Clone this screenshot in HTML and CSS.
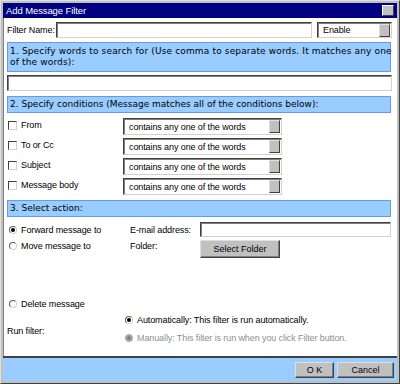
FILE: index.html
```html
<!DOCTYPE html>
<html lang="en">
<head>
    <meta charset="UTF-8">
    <title>Add Message Filter</title>
    <link rel="stylesheet" href="styles.css">
</head>
<body>
    <div class="window">
        <div class="titlebar">
            <span class="title">Add Message Filter</span>
            <span class="close-btn"></span>
        </div>
        <div class="content">
            <div class="name-row">
                <label class="lbl">Filter Name:</label>
                <div class="field name-field"></div>
                <div class="select enable-select"><span>Enable</span><i class="arrow"></i></div>
            </div>

            <div class="section tall">1. Specify words to search for (Use comma to separate words. It matches any one<br>of the words):</div>
            <div class="field words-field"></div>

            <div class="section">2. Specify conditions (Message matches all of the conditions below):</div>
            <div class="cond-list">
                <div class="cond-row">
                    <span class="check"></span><span class="lbl cond-lbl">From</span>
                    <div class="select cond-select"><span>contains any one of the words</span><i class="arrow"></i></div>
                </div>
                <div class="cond-row">
                    <span class="check"></span><span class="lbl cond-lbl">To or Cc</span>
                    <div class="select cond-select"><span>contains any one of the words</span><i class="arrow"></i></div>
                </div>
                <div class="cond-row">
                    <span class="check"></span><span class="lbl cond-lbl">Subject</span>
                    <div class="select cond-select"><span>contains any one of the words</span><i class="arrow"></i></div>
                </div>
                <div class="cond-row">
                    <span class="check"></span><span class="lbl cond-lbl">Message body</span>
                    <div class="select cond-select"><span>contains any one of the words</span><i class="arrow"></i></div>
                </div>
            </div>

            <div class="section">3. Select action:</div>
            <div class="action-row forward">
                <span class="radio on"></span><span class="lbl act-lbl">Forward message to</span>
                <span class="lbl sub-lbl">E-mail address:</span>
                <div class="field mail-field"></div>
            </div>
            <div class="action-row move">
                <span class="radio"></span><span class="lbl act-lbl">Move message to</span>
                <span class="lbl sub-lbl">Folder:</span>
                <button class="btn folder-btn">Select Folder</button>
            </div>
            <div class="action-row delete">
                <span class="radio"></span><span class="lbl act-lbl">Delete message</span>
            </div>

            <div class="run-row">
                <span class="lbl run-lbl">Run filter:</span>
                <div class="run-opts">
                    <div class="run-opt"><span class="radio on"></span><span class="lbl">Automatically: This filter is run automatically.</span></div>
                    <div class="run-opt disabled"><span class="radio on off"></span><span class="lbl">Manually: This filter is run when you click Filter button.</span></div>
                </div>
            </div>
        </div>
        <div class="bottombar">
            <button class="btn ok-btn">O K</button>
            <button class="btn cancel-btn">Cancel</button>
        </div>
    </div>
</body>
</html>
```

FILE: styles.css
```css
body {
    margin: 0;
    padding: 0;
    background-color: #ffffff;
    font-family: "Liberation Sans", Arial, sans-serif;
}

.window {
    width: 400px;
    height: 384px;
    box-sizing: border-box;
    background-color: #c0c0c0;
    border-top: 1px solid #dfdfdf;
    border-left: 1px solid #dfdfdf;
    border-right: 1px solid #404040;
    border-bottom: 1px solid #404040;
    padding: 2px;
    display: flex;
    flex-direction: column;
}

.titlebar {
    height: 15px;
    background-color: #000080;
    display: flex;
    align-items: center;
    justify-content: space-between;
    padding: 0 3px 0 3px;
}

.title {
    color: white;
    font-size: 9.5px;
    letter-spacing: -0.1px;
}

.close-btn {
    width: 10px;
    height: 9px;
    background-color: #c0c0c0;
    border-top: 1px solid #fff;
    border-left: 1px solid #fff;
    border-right: 1px solid #404040;
    border-bottom: 1px solid #404040;
}

.content {
    flex: 1;
    background-color: #fff;
    border-left: 1px solid #808080;
    padding: 4px 5px 0 3px;
    display: flex;
    flex-direction: column;
}

.lbl {
    font-size: 9px;
    letter-spacing: -0.1px;
    color: #000;
    white-space: nowrap;
}

.field {
    height: 16px;
    box-sizing: border-box;
    background: #fff;
    border-top: 1px solid #404040;
    border-left: 1px solid #404040;
    border-right: 1px solid #d4d0c8;
    border-bottom: 1px solid #d4d0c8;
    box-shadow: inset 1px 1px 0 #808080;
}

.select {
    height: 17px;
    box-sizing: border-box;
    background: #fff;
    border-top: 1px solid #404040;
    border-left: 1px solid #404040;
    border-right: 1px solid #d4d0c8;
    border-bottom: 1px solid #d4d0c8;
    box-shadow: inset 1px 1px 0 #808080;
    display: flex;
    align-items: center;
    justify-content: space-between;
    font-size: 9px;
    letter-spacing: -0.1px;
    padding-left: 5px;
}

.arrow {
    width: 11px;
    height: 13px;
    box-sizing: border-box;
    background: #c0c0c0;
    border-top: 1px solid #dfdfdf;
    border-left: 1px solid #dfdfdf;
    border-right: 1px solid #404040;
    border-bottom: 1px solid #404040;
    margin-right: 1px;
}

.name-row {
    display: flex;
    align-items: center;
    height: 16px;
}

.name-row .lbl {
    width: 49px;
}

.name-field {
    width: 256px;
}

.enable-select {
    margin-left: 5px;
    width: 75px;
    height: 16px;
}

.section {
    margin-top: 5px;
    background-color: #99ccff;
    border: 1px solid #6699ee;
    font-family: "DejaVu Sans", Verdana, sans-serif;
    font-size: 9px;
    color: #000;
    padding: 2px 2px;
    line-height: 11px;
    height: 17px;
    box-sizing: border-box;
    margin-right: 1px;
    white-space: nowrap;
}

.section.tall {
    margin-top: 4px;
    height: 30px;
    padding-top: 3px;
    letter-spacing: 0.15px;
}

.words-field {
    margin-top: 3px;
}

.cond-list {
    margin-top: 5px;
    display: flex;
    flex-direction: column;
    gap: 3px;
}

.cond-row {
    display: flex;
    align-items: center;
    height: 17px;
}

.check {
    width: 9px;
    height: 9px;
    box-sizing: border-box;
    border-top: 1px solid #404040;
    border-left: 1px solid #404040;
    border-right: 1px solid #d4d0c8;
    border-bottom: 1px solid #d4d0c8;
    margin-left: 1px;
    margin-top: -3px;
}

.cond-lbl {
    margin-left: 4px;
    width: 102px;
    margin-top: -4px;
}

.cond-select {
    width: 159px;
}

.action-row {
    display: flex;
    align-items: center;
    height: 15px;
}

.action-row.forward {
    margin-top: 5px;
}

.radio {
    width: 8px;
    height: 8px;
    border-radius: 50%;
    box-sizing: border-box;
    border: 1px solid #606060;
    border-right-color: #d4d0c8;
    border-bottom-color: #d4d0c8;
    position: relative;
    margin-left: 2px;
    flex-shrink: 0;
}

.radio.on::after {
    content: "";
    position: absolute;
    left: 1px;
    top: 1px;
    width: 4px;
    height: 4px;
    border-radius: 50%;
    background: #000;
}

.radio.off {
    background: #b0b0b0;
    border-color: #a0a0a0;
}

.radio.off::after {
    background: #808080;
}

.act-lbl {
    margin-left: 4px;
    width: 109px;
}

.sub-lbl {
    width: 70px;
}

.mail-field {
    width: 191px;
    height: 15px;
}

.action-row.move {
    margin-top: 3px;
    height: 18px;
    align-items: flex-start;
}

.action-row.move .radio {
    margin-top: 2px;
}

.action-row.move .lbl {
    line-height: 12px;
}

.btn {
    font-family: "Liberation Sans", Arial, sans-serif;
    font-size: 9px;
    color: #000;
    background: #c0c0c0;
    border-top: 1px solid #dfdfdf;
    border-left: 1px solid #dfdfdf;
    border-right: 1px solid #404040;
    border-bottom: 1px solid #404040;
    box-shadow: inset -1px -1px 0 #808080;
    padding: 0;
    margin: 0;
}

.folder-btn {
    width: 80px;
    height: 18px;
}

.action-row.delete {
    margin-top: 40px;
    height: 12px;
}

.run-row {
    margin-top: 4px;
    display: flex;
    align-items: center;
}

.run-lbl {
    width: 118px;
    margin-top: 3px;
}

.run-opts {
    display: flex;
    flex-direction: column;
    gap: 6px;
}

.run-opt {
    display: flex;
    align-items: center;
    height: 12px;
}

.run-opt .radio {
    margin-left: 0;
}

.run-opt .lbl {
    margin-left: 4px;
}

.run-opt.disabled .lbl {
    color: #909090;
}

.bottombar {
    height: 23px;
    background-color: #99ccff;
    border-top: 2px solid #404040;
    display: flex;
    justify-content: flex-end;
    align-items: center;
    gap: 3px;
    padding-right: 3px;
}

.ok-btn {
    width: 39px;
    height: 16px;
}

.cancel-btn {
    width: 57px;
    height: 16px;
}
```
